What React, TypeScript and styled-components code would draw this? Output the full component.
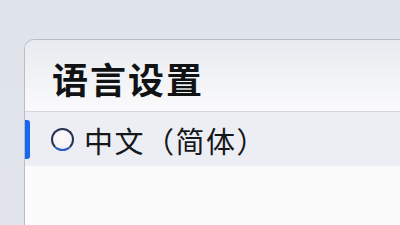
import styled, { createGlobalStyle } from 'styled-components';

const GlobalStyle = createGlobalStyle`
  html, body {
    margin: 0;
    padding: 0;
    width: 400px;
    height: 225px;
    overflow: hidden;
    background: #dde1e9;
  }
  body {
    font-family: "Noto Sans CJK SC", "Noto Sans", sans-serif;
  }
`;

const Page = styled.div`
  width: 400px;
  height: 225px;
  padding: 39px 0 0 24px;
  box-sizing: border-box;
  overflow: hidden;
  background: linear-gradient(180deg, #dfe3ea 0%, #e2e5ec 100%);
`;

const Panel = styled.div`
  width: 376px;
  height: 186px;
  box-sizing: border-box;
  border-top: 1px solid #b9bdc9;
  border-left: 1px solid #b9bdc9;
  border-top-left-radius: 10px;
  background: #fbfbfc;
  overflow: hidden;
  display: flex;
  flex-direction: column;
`;

const Header = styled.div`
  height: 72px;
  flex-shrink: 0;
  box-sizing: border-box;
  padding-left: 27px;
  display: flex;
  align-items: center;
  background: linear-gradient(180deg, #e7eaef 0%, #f3f4f7 60%, #fafafb 100%);
  border-bottom: 1px solid #d3d7df;
`;

const Title = styled.h1`
  margin: 0;
  font-size: 36px;
  font-weight: 700;
  color: #111214;
  letter-spacing: 2px;
  line-height: 1;
  transform: translateY(2px);
`;

const Row = styled.div<{ $selected?: boolean }>`
  position: relative;
  height: 54px;
  flex-shrink: 0;
  display: flex;
  align-items: center;
  gap: 10px;
  padding-left: 26px;
  background: ${(p) => (p.$selected ? '#eceef3' : 'transparent')};
`;

const SelectBar = styled.span`
  position: absolute;
  left: 0;
  top: 8px;
  width: 5px;
  height: 39px;
  border-radius: 0 3px 3px 0;
  background: #1767ef;
`;

const Radio = styled.span`
  width: 19px;
  height: 19px;
  border-radius: 50%;
  border: 2px solid #283352;
  border-bottom-color: #2c5fc4;
  background: radial-gradient(circle at 50% 40%, #fcfafc 0%, #f2eef3 100%);
  flex-shrink: 0;
`;

const Label = styled.span`
  font-size: 29px;
  font-weight: 400;
  color: #16171a;
  letter-spacing: 1.5px;
  line-height: 1;
  transform: translateY(1px);
`;

const Blank = styled.div`
  flex: 1;
  background: #fbfbfc;
`;

export default function App() {
  return (
    <>
      <GlobalStyle />
      <Page>
        <Panel>
          <Header>
            <Title>语言设置</Title>
          </Header>
          <Row $selected>
            <SelectBar />
            <Radio />
            <Label>中文（简体）</Label>
          </Row>
          <Blank />
        </Panel>
      </Page>
    </>
  );
}
